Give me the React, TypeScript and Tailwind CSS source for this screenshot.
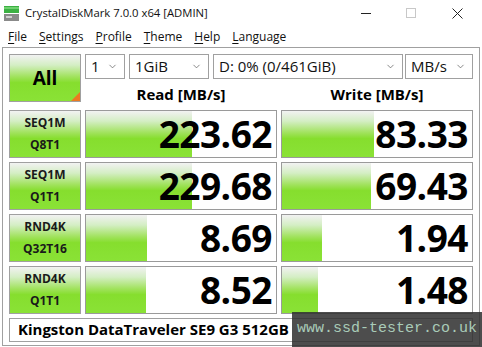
import { ChevronDown } from 'lucide-react';

const rows = [
  { a: 'SEQ1M', b: 'Q8T1', read: '223.62', write: '83.33', rw: 106, ww: 92 },
  { a: 'SEQ1M', b: 'Q1T1', read: '229.68', write: '69.43', rw: 106, ww: 89 },
  { a: 'RND4K', b: 'Q32T16', read: '8.69', write: '1.94', rw: 61, ww: 40 },
  { a: 'RND4K', b: 'Q1T1', read: '8.52', write: '1.48', rw: 60, ww: 36 },
];

const green = 'bg-[linear-gradient(to_bottom,#f2f2f2_0%,#d4eec4_22%,#9fe25a_48%,#86de2e_60%,#8ae236_100%)]';

function Select({ text, className }: { text: string; className: string }) {
  return (
    <div className={`flex h-[25px] items-center justify-between border border-[#a0a0a0] bg-white pl-[5px] pr-[6px] text-[15px] text-[#111] ${className}`}>
      <span>{text}</span>
      <ChevronDown size={11} strokeWidth={1.5} className="text-[#555]" />
    </div>
  );
}

function Cell({ value, width }: { value: string; width: number }) {
  return (
    <div className="relative h-[48px] border border-[#9a9a9a] bg-white">
      <div className={`absolute left-0 top-0 h-full ${green}`} style={{ width }} />
      <div className="relative flex h-full items-center justify-end pr-[4px] text-[37px] font-bold leading-none tracking-[-0.5px] text-black">
        {value}
      </div>
    </div>
  );
}

export default function App() {
  return (
    <div className="relative h-[347px] w-[482px] overflow-hidden bg-white font-['Open_Sans',sans-serif] text-black">
      {/* title bar */}
      <div className="flex h-[26px] items-center">
        <svg width="15" height="16" viewBox="0 0 15 16" className="ml-[4px] mt-[1px]">
          <rect x="0" y="0" width="15" height="7" fill="#3cb043" />
          <rect x="0" y="1" width="15" height="2" fill="#6fd16f" />
          <rect x="0" y="8" width="15" height="7" fill="#8a8a8a" />
          <rect x="2" y="10" width="6" height="2" fill="#cfcfcf" />
        </svg>
        <span className="ml-[6px] text-[11.3px] text-[#111]">CrystalDiskMark 7.0.0 x64 [ADMIN]</span>
        <div className="ml-auto flex items-center">
          <div className="mr-[35px] h-px w-[10px] bg-[#222]" />
          <div className="mr-[36px] h-[10px] w-[10px] border border-[#c8c8c8]" />
          <svg width="11" height="11" viewBox="0 0 11 11" className="mr-[19px]">
            <path d="M0.5 0.5 L10.5 10.5 M10.5 0.5 L0.5 10.5" stroke="#222" strokeWidth="1" />
          </svg>
        </div>
      </div>
      {/* menu */}
      <div className="flex h-[21px] items-center pl-[8px] text-[12px] text-[#111]">
        {['File', 'Settings', 'Profile', 'Theme', 'Help', 'Language'].map((m) => (
          <span key={m} className="mr-[12px]">
            <span className="underline underline-offset-2">{m[0]}</span>
            {m.slice(1)}
          </span>
        ))}
      </div>
      {/* body */}
      <div className="mx-[2px] h-[299px] border border-[#a0a0a0] px-[6px] pt-[6px]">
        <div className="flex gap-[4px]">
          <div className={`relative flex h-[48px] w-[72px] items-center justify-center border border-[#a0a0a0] ${green} text-[19px] font-bold`}>
            All
            <div className="absolute bottom-0 right-0 h-0 w-0 border-b-[9px] border-l-[9px] border-b-[#ec7a22] border-l-transparent" />
          </div>
          <div className="flex flex-col">
            <div className="flex">
              <Select text="1" className="w-[40px]" />
              <Select text="1GiB" className="ml-[4px] w-[80px]" />
              <Select text="D: 0% (0/461GiB)" className="ml-[4px] w-[190px]" />
              <Select text="MB/s" className="ml-[2px] w-[68px]" />
            </div>
            <div className="flex gap-[4px] pt-[4px] text-[15px] font-bold">
              <div className="w-[192px] text-center">Read [MB/s]</div>
              <div className="w-[192px] text-center">Write [MB/s]</div>
            </div>
          </div>
        </div>
        <div className="mt-[4px] flex flex-col gap-[4px]">
          {rows.map((r, i) => (
            <div key={i} className="grid grid-cols-[72px_192px_192px] gap-[4px]">
              <div className={`flex h-[48px] flex-col items-center justify-center border border-[#a0a0a0] ${green} text-[12px] font-bold leading-[22px] text-[#1a1a1a]`}>
                <span>{r.a}</span>
                <span>{r.b}</span>
              </div>
              <Cell value={r.read} width={r.rw} />
              <Cell value={r.write} width={r.ww} />
            </div>
          ))}
        </div>
        <div className="mt-[4px] flex h-[24px] items-center border border-[#a0a0a0] bg-white pl-[8px] text-[15px] font-bold">
          Kingston DataTraveler SE9 G3 512GB
        </div>
      </div>
      {/* watermark */}
      <div className="absolute bottom-0 left-[292px] right-0 top-[312px] flex items-center bg-[#2e2e2e]/85 pl-[5px] font-['Liberation_Mono',monospace] text-[15px] text-[#a9cbb8]">
        www.ssd-tester.co.uk
      </div>
    </div>
  );
}
